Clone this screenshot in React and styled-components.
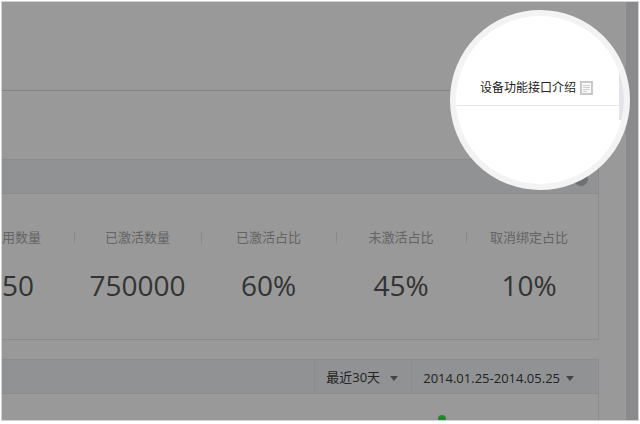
import styled, { createGlobalStyle } from "styled-components";

const stats = [
    { label: "已激活数量", value: "750000" },
    { label: "已激活占比", value: "60%" },
    { label: "未激活占比", value: "45%" },
    { label: "取消绑定占比", value: "10%" },
]

export default function App (){
    return(
        <>
            <GlobalStyle/>
            <Page>
                <Screen>
                    <Content>
                        <TopBar/>
                        <Panel>
                            <PanelHeader>
                                <HelpButton aria-label="help"/>
                            </PanelHeader>
                            <Stats>
                                <Stat $cut>
                                    <StatLabel>用数量</StatLabel>
                                    <StatValue>50</StatValue>
                                </Stat>
                                {stats.map((stat) => (
                                    <Stat key={stat.label}>
                                        <StatLabel>{stat.label}</StatLabel>
                                        <StatValue>{stat.value}</StatValue>
                                    </Stat>
                                ))}
                            </Stats>
                        </Panel>
                        <Panel $grow>
                            <PanelHeader>
                                <Filter>
                                    <Period aria-label="period">
                                        <option>最近30天</option>
                                    </Period>
                                    <Arrow/>
                                </Filter>
                                <Filter $last>
                                    <DateRange>2014.01.25-2014.05.25</DateRange>
                                    <Arrow/>
                                </Filter>
                            </PanelHeader>
                            <Chart viewBox="0 0 597 26" preserveAspectRatio="xMaxYMin slice">
                                <circle cx="441" cy="25" r="4" fill="#25852E"/>
                            </Chart>
                        </Panel>
                    </Content>
                    <ScrollTrack/>
                    <Magnifier>
                        <MagnifiedBar>
                            <DocLink href="#">
                                设备功能接口介绍
                                <DocIcon/>
                            </DocLink>
                        </MagnifiedBar>
                        <MagnifiedScroll/>
                    </Magnifier>
                </Screen>
            </Page>
        </>
    )
}

function Arrow (){
    return(
        <ArrowSvg width="8" height="5" viewBox="0 0 8 5">
            <path d="M0 0H8L4 5Z" fill="#454545"/>
        </ArrowSvg>
    )
}

function DocIcon (){
    return(
        <svg width="13" height="14" viewBox="0 0 13 14">
            <path d="M1 1H12V13H1Z" fill="#FAFAFA" stroke="#C8C8C8" strokeWidth="2"/>
            <path d="M3 4.5H10M3 6.5H10M3 8.5H10M3 10.5H7" stroke="#CFCFCF"/>
        </svg>
    )
}

const GlobalStyle = createGlobalStyle`
* {
    box-sizing: border-box;
}
body {
    margin: 0;
    background-color: #FFFFFF;
    font-family: "Open Sans", "Noto Sans CJK SC", sans-serif;
}
button, select {
    font: inherit;
    color: inherit;
    border: none;
    padding: 0;
    background: none;
}
`
const Page = styled.div`
min-height: 100vh;
padding: 2px 2px 4px;
display: flex;
`
const Screen = styled.div`
position: relative;
flex: 1;
display: flex;
overflow: hidden;
background-color: #999999;
outline: 1px solid #D2D4D4;
`
const Content = styled.main`
flex: 1;
display: flex;
flex-direction: column;
`
const TopBar = styled.header`
height: 89px;
margin-bottom: 68px;
border-bottom: 1px solid #858585;
`
const Panel = styled.section`
margin-right: 27px;
margin-bottom: ${(props) => props.$grow ? "0" : "19px"};
border: 1px solid #8B8C8D;
border-left: none;
border-bottom-width: ${(props) => props.$grow ? "0" : "1px"};
flex: ${(props) => props.$grow ? "1" : "none"};
display: flex;
flex-direction: column;
`
const PanelHeader = styled.div`
height: 34px;
border-bottom: 1px solid #8B8C8D;
background-color: #909294;
display: flex;
align-items: center;
justify-content: flex-end;
`
const HelpButton = styled.button`
width: 14px;
height: 14px;
margin-right: 10px;
margin-top: 4px;
border-radius: 50%;
background-color: #6E7072;
`
const Stats = styled.div`
display: grid;
grid-template-columns: 72px 127fr 135fr 130fr 126fr;
padding: 32px 6px 35px 0;
`
const Stat = styled.div`
display: flex;
flex-direction: column;
align-items: ${(props) => props.$cut ? "flex-start" : "center"};
gap: 18px;

& + & {
    background: linear-gradient(#8A8A8A, #8A8A8A) no-repeat 0 6px / 1px 12px;
}
`
const StatLabel = styled.div`
font-size: 13px;
line-height: 22px;
color: #646464;
`
const StatValue = styled.div`
font-size: 28px;
line-height: 38px;
color: #333333;
`
const Filter = styled.div`
position: relative;
align-self: stretch;
display: flex;
border-left: 1px solid #8A8B8C;
font-size: 13px;
color: #222222;

& > :first-child {
    padding-left: 11px;
    padding-right: ${(props) => props.$last ? "38px" : "31px"};
}
& > svg {
    right: ${(props) => props.$last ? "24px" : "13px"};
}
`
const Period = styled.select`
appearance: none;
`
const DateRange = styled.button`
padding-top: 2px;
`
const ArrowSvg = styled.svg`
position: absolute;
top: 16px;
pointer-events: none;
`
const Chart = styled.svg`
width: 100%;
height: 26px;
`
const ScrollTrack = styled.div`
width: 12px;
background-color: #8A8A8D;
`
const Magnifier = styled.aside`
position: absolute;
top: 8px;
right: 8px;
width: 180px;
height: 180px;
overflow: hidden;
border: 6px solid #F3F3F3;
border-radius: 50%;
background-color: #FFFFFF;
display: flex;
align-items: flex-start;
`
const MagnifiedBar = styled.div`
flex: 1;
height: 90px;
padding-bottom: 7px;
border-bottom: 1px solid #E6E6E6;
display: flex;
align-items: flex-end;
justify-content: flex-end;
`
const DocLink = styled.a`
margin-right: 26px;
display: flex;
align-items: center;
gap: 4px;
font-size: 12px;
line-height: 20px;
color: #222222;
text-decoration: none;
white-space: nowrap;
`
const MagnifiedScroll = styled.div`
width: 5px;
height: 50px;
margin-top: 54px;
background-color: #E4E4E8;
`
